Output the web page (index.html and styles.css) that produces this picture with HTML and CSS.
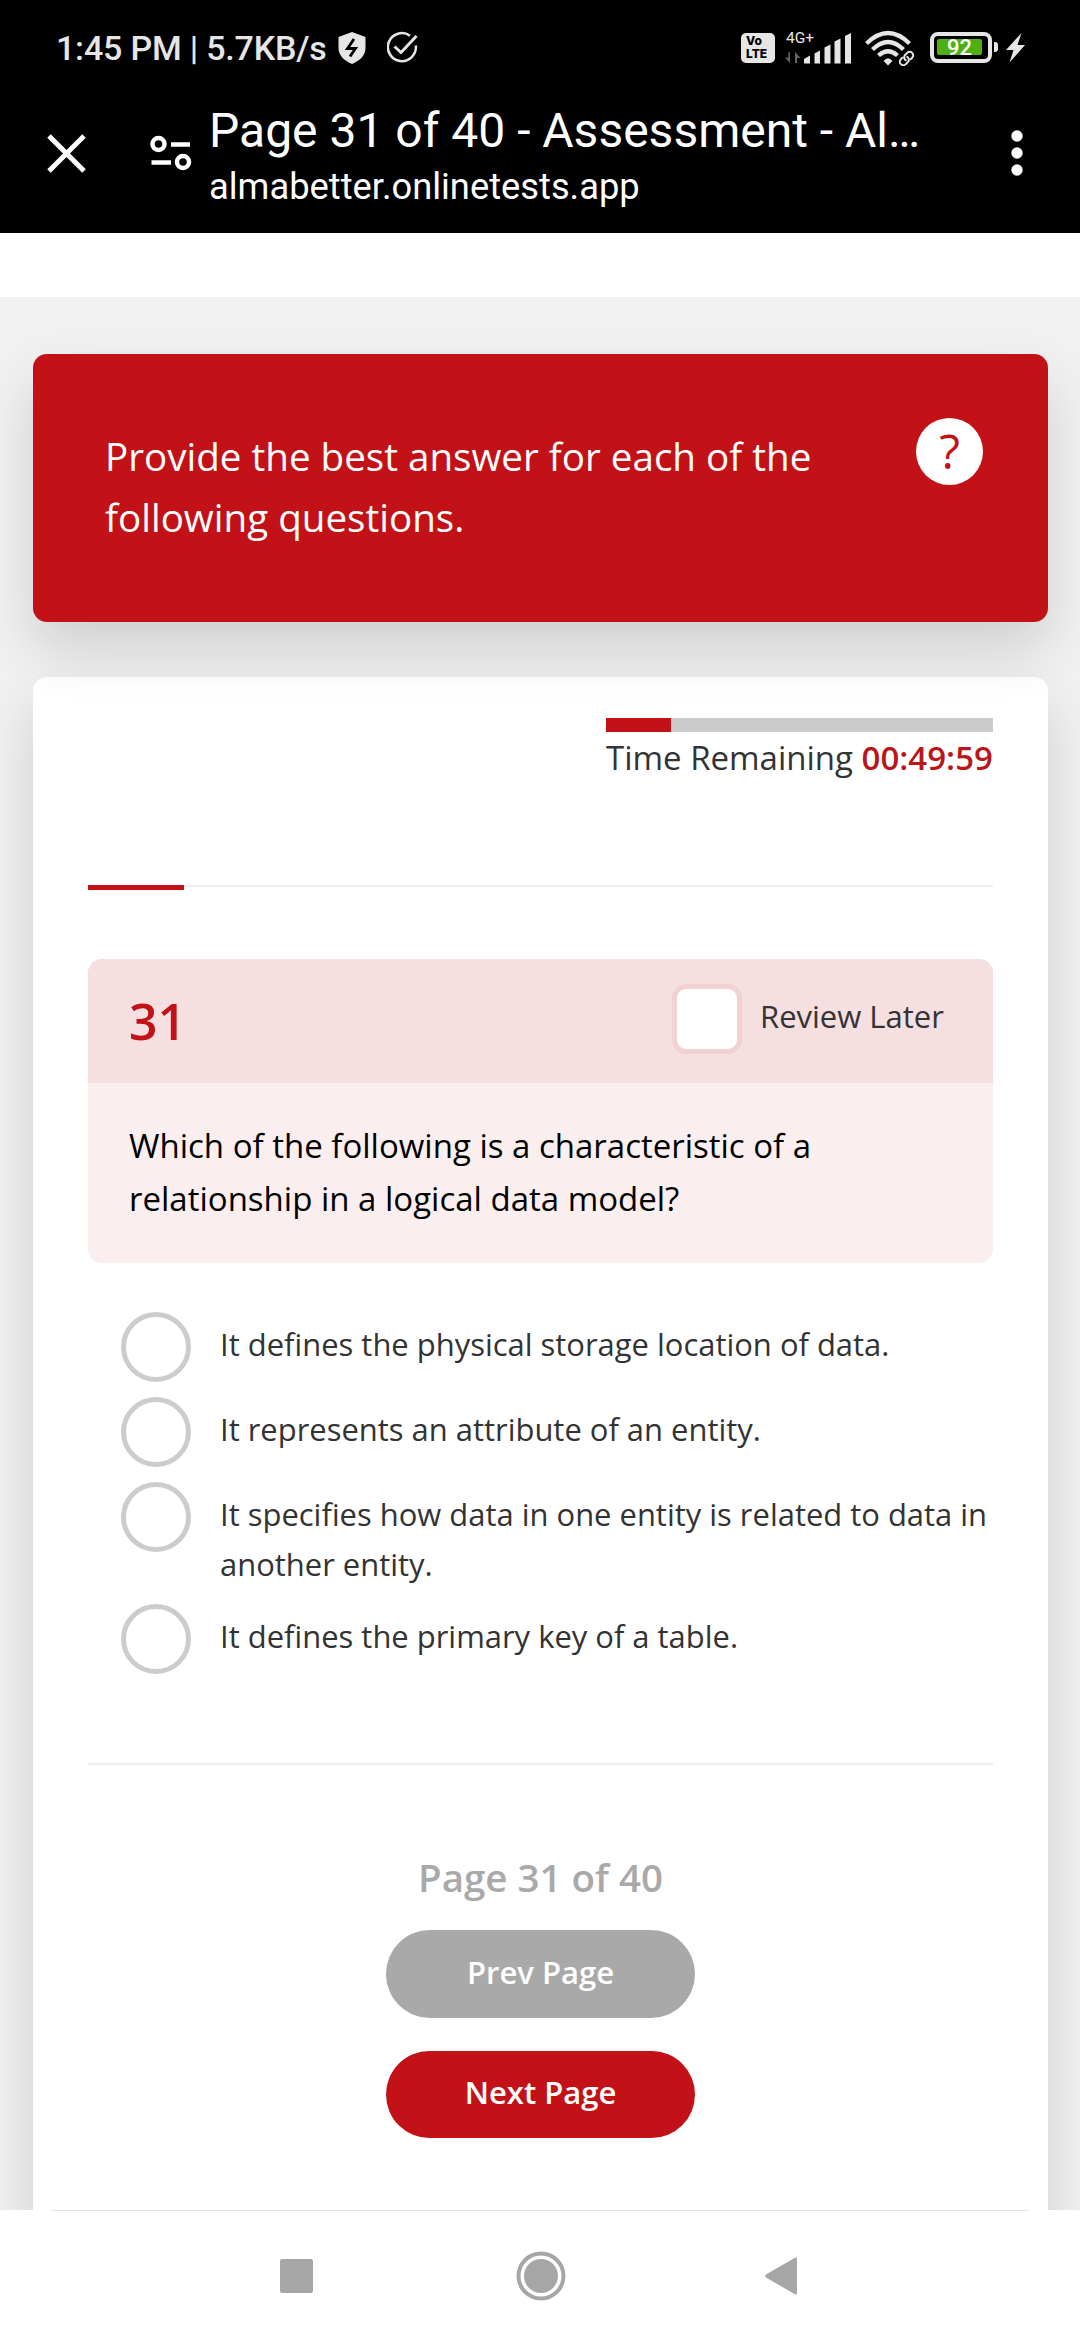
FILE: index.html
```html
<!DOCTYPE html>
<html lang="en">
<head>
<meta charset="utf-8">
<title>Page 31 of 40 - Assessment</title>
<link rel="stylesheet" href="styles.css">
</head>
<body>
<div class="screen">
  <header class="top">
    <div class="status">
      <div class="status-left">
        <span class="clock">1:45 PM | 5.7KB/s</span>
        <svg class="shield" width="28" height="34" viewBox="0 0 28 34"><path d="M14 1 L27.500 6 V17 C27.500 25 21 30 14 33 C7 30 .5 25 .5 17 V6 Z" fill="#e6e6e6"/><path d="M16 8 L9.500 17.500 H17.500 L12 25.500" fill="none" stroke="#000" stroke-width="2.800"/></svg>
        <svg class="tick" width="32" height="34" viewBox="0 0 32 34"><path d="M23 4.700 A14 14 0 1 0 28.800 14.500" fill="none" stroke="#e6e6e6" stroke-width="2.500"/><path d="M7.500 15.500 L14 21.500 L29.500 5" fill="none" stroke="#e6e6e6" stroke-width="3"/></svg>
      </div>
      <div class="status-right">
        <span class="volte"><span>Vo</span><span>LTE</span></span>
        <span class="signal">
          <span class="net">4G+</span>
          <svg width="66" height="31" viewBox="0 0 66 31"><path d="M5 19 V30 L0 24.500 H3.500 V19Z M10 30 V19 L15.500 25 H12 V30Z" fill="#666"/><g fill="#e6e6e6"><path d="M19 30 V26 L25 22.500 V30.500 H19Z"/><path d="M29.500 30.500 V20.500 L35 17.500 V30.500Z"/><path d="M39.500 30.500 V14.500 L45.500 11.500 V30.500Z"/><path d="M49.500 30.500 V8.500 L55.500 5.500 V30.500Z"/><path d="M60 30.500 V3 L66 0 V30.500Z"/></g></svg>
        </span>
        <svg class="wifi" width="50" height="36" viewBox="0 0 50 36"><g fill="none" stroke="#e6e6e6" stroke-width="4.300"><path d="M1.500 13.500 Q23 -7.500 44.500 13.500"/><path d="M7.500 19.500 Q23 4.500 38.500 19.500"/><path d="M13.500 25.500 Q23 17 32.500 25.500"/></g><path d="M18.500 31 Q23 25.500 27.500 31 L23 35.500Z" fill="#e6e6e6"/><g transform="rotate(-45 41.500 28.500)" fill="none" stroke="#000" stroke-width="6"><rect x="33" y="25" width="10" height="7" rx="3.500"/><rect x="40" y="25" width="10" height="7" rx="3.500"/></g><g transform="rotate(-45 41.500 28.500)" fill="none" stroke="#e6e6e6" stroke-width="2"><path d="M40 25 H37 a3.500 3.500 0 0 0 0 7 H40 a3.500 3.500 0 0 0 3 -5"/><path d="M43 32 H46 a3.500 3.500 0 0 0 0 -7 H43 a3.500 3.500 0 0 0 -3 5"/></g></svg>
        <span class="battery"><span class="level">92</span></span><span class="cap"></span>
        <svg class="bolt" width="19" height="30" viewBox="0 0 19 30"><path d="M15.500 0 L0 17 H7.500 L3.500 29.500 L19 12 H11.500 Z" fill="#e6e6e6"/></svg>
      </div>
    </div>
    <div class="toolbar">
      <svg class="close" width="39" height="39" viewBox="0 0 39 39"><path d="M2 2 L37 37 M37 2 L2 37" stroke="#fff" stroke-width="5"/></svg>
      <svg class="tune" width="42" height="36" viewBox="0 0 42 36"><g fill="none" stroke="#fff" stroke-width="4.500"><circle cx="8.500" cy="9" r="6"/><circle cx="33" cy="27" r="6"/><path d="M21 9.500 H40 M1.500 27.500 H21"/></g></svg>
      <div class="heading">
        <div class="title">Page 31 of 40 - Assessment - Al…</div>
        <div class="url">almabetter.onlinetests.app</div>
      </div>
      <svg class="more" width="12" height="46" viewBox="0 0 12 46"><g fill="#fff"><circle cx="6" cy="6" r="5.700"/><circle cx="6" cy="23" r="5.700"/><circle cx="6" cy="40" r="5.700"/></g></svg>
    </div>
  </header>
  <main class="page">
    <section class="intro">
      <p class="intro-text">Provide the best answer for each of the following questions.</p>
      <span class="help">?</span>
    </section>
    <section class="card">
      <div class="timer">
        <div class="timer-bar"><div class="timer-fill"></div></div>
        <div class="timer-text">Time Remaining <b>00:49:59</b></div>
      </div>
      <div class="rule"><div class="rule-fill"></div></div>
      <div class="question">
        <div class="question-head">
          <span class="number">31</span>
          <span class="review"><span class="checkbox"></span><span class="review-label">Review Later</span></span>
        </div>
        <p class="question-text">Which of the following is a characteristic of a<br>relationship in a logical data model?</p>
      </div>
      <ul class="answers">
        <li><span class="radio"></span><span class="answer">It defines the physical storage location of data.</span></li>
        <li><span class="radio"></span><span class="answer">It represents an attribute of an entity.</span></li>
        <li><span class="radio"></span><span class="answer">It specifies how data in one entity is related to data in<br>another entity.</span></li>
        <li><span class="radio"></span><span class="answer">It defines the primary key of a table.</span></li>
      </ul>
      <div class="pager">
        <div class="pager-text">Page 31 of 40</div>
        <div class="button prev">Prev Page</div>
        <div class="button next">Next Page</div>
      </div>
    </section>
  </main>
  <nav class="navbar">
    <div class="nav-line"></div>
    <div class="nav-keys">
      <svg width="33" height="34" viewBox="0 0 33 34"><rect width="33" height="34" rx="2" fill="#a6a6a6"/></svg>
      <svg class="home" width="50" height="50" viewBox="0 0 50 50"><circle cx="25" cy="25" r="22.500" fill="none" stroke="#a6a6a6" stroke-width="4"/><circle cx="25" cy="25" r="17" fill="#a6a6a6"/></svg>
      <svg class="back" width="32" height="38" viewBox="0 0 32 38"><path d="M1 17.500 L30 .7 Q32 0 32 2 V36 Q32 38 30 37.300 L1 20.500 Q-.5 19 1 17.500Z" fill="#a6a6a6"/></svg>
    </div>
  </nav>
</div>
</body>
</html>
```
FILE: styles.css
```css
* { box-sizing: border-box; }
body { margin: 0; background: #fff; font-family: "Open Sans", "Noto Sans", sans-serif; color: #333; }
p, ul { margin: 0; padding: 0; list-style: none; }
svg { display: block; flex: none; }
.screen { width: 1080px; height: 2340px; display: flex; flex-direction: column; overflow: hidden; }

.top { height: 233px; flex: none; background: #000; color: #fff; font-family: Roboto, sans-serif; }
.status { height: 96px; display: flex; justify-content: space-between; padding: 0 55px 0 56px; }
.status-left, .status-right { display: flex; align-items: flex-start; }
.clock { font-size: 34px; font-weight: 500; letter-spacing: -.2px; line-height: 40px; color: #e6e6e6; margin-top: 28px; width: 282px; white-space: nowrap; }
.shield { margin-top: 31px; }
.tick { margin: 31px 0 0 21px; }
.volte { width: 34px; height: 30px; margin-top: 33px; border-radius: 5px; background: #e6e6e6; color: #000; font: 800 12px/12px Inter, sans-serif; padding: 2px 0 0 5px; display: flex; flex-direction: column; gap: 1px; }
.signal { margin: 31px 0 0 10px; width: 66px; height: 33px; display: grid; }
.signal > * { grid-area: 1 / 1; }
.signal svg { margin-top: 2px; }
.net { font-size: 15.5px; line-height: 14px; color: #e6e6e6; padding-left: 1px; }
.wifi { margin: 30px 0 0 14px; }
.battery { width: 62px; height: 31px; margin: 32px 0 0 15px; border: 4px solid #e6e6e6; border-radius: 8px; padding: 3px; }
.level { display: block; width: 45px; height: 16px; border-radius: 2px; background: #4fb014; color: #fff; font-size: 22px; font-weight: 500; line-height: 18px; text-align: center; }
.cap { width: 4px; height: 10px; margin: 42px 0 0 2px; border-radius: 0 3px 3px 0; background: #e6e6e6; }
.bolt { margin: 33px 0 0 8px; }

.toolbar { height: 137px; display: flex; padding-left: 47px; }
.close { margin-top: 38px; }
.tune { margin: 39px 0 0 64px; }
.heading { margin-left: 17px; width: 802px; white-space: nowrap; }
.title { font-size: 48px; line-height: 58px; margin-top: 6px; }
.url { font-size: 36.3px; line-height: 42px; margin-top: 6px; }
.more { margin-top: 34px; }

.page { flex: 1; min-height: 0; overflow: hidden; border-top: 64px solid #fff; background: #f1f1f1; padding: 57px 32px 0 33px; }
.intro { height: 268px; border-radius: 14px; background: #c21217; color: #fff; position: relative; z-index: 1; display: flex; justify-content: space-between; padding: 64px 65px 0 72px; box-shadow: 0 27px 55px rgba(0,0,0,.14); }
.intro-text { width: 740px; font-size: 38.6px; line-height: 61px; margin-top: 8px; }
.help { width: 67px; height: 67px; border-radius: 50%; background: #fff; color: #c21217; font-size: 48px; line-height: 66px; text-align: center; }

.card { margin-top: 55px; height: 1800px; border-radius: 14px; background: #fff; box-shadow: 0 27px 55px rgba(0,0,0,.14); padding: 41px 55px 0; }
.timer { width: 387px; height: 167px; margin-left: auto; }
.timer-bar { height: 14px; background: #ccc; }
.timer-fill { width: 65px; height: 14px; background: #c21217; }
.timer-text { font-size: 33px; line-height: 52px; white-space: nowrap; }
.timer-text b { font-weight: 600; color: #b9161b; }
.rule { height: 5px; border-top: 2px solid #eee; }
.rule-fill { width: 96px; height: 5px; margin-top: -2px; background: #c21217; }
.question { margin-top: 69px; height: 304px; border-radius: 14px; overflow: hidden; background: #faeeee; }
.question-head { height: 124px; background: #f6dfe1; display: flex; justify-content: space-between; padding: 25px 49px 0 41px; }
.number { font-size: 50px; font-weight: 600; line-height: 70px; margin-top: 2px; color: #c21217; }
.review { display: flex; }
.checkbox { width: 70px; height: 70px; border: 5px solid #f2d1d3; border-radius: 14px; background: #fff; }
.review-label { font-size: 31px; line-height: 50px; margin: 7px 0 0 18px; width: 184px; white-space: nowrap; }
.question-text { font-size: 33px; line-height: 53px; color: #000; padding: 36px 0 0 41px; white-space: nowrap; }
.answers { margin-top: 49px; height: 451px; padding-left: 33px; }
.answers li { display: flex; min-height: 85px; padding-bottom: 15px; }
.answers li:nth-child(3) { height: 122px; }
.radio { width: 70px; height: 70px; flex: none; border: 5px solid #ccc; border-radius: 50%; }
.answer { font-size: 30.95px; line-height: 50px; margin: 7px 0 0 29px; white-space: nowrap; }
.pager { border-top: 2px solid #eee; display: flex; flex-direction: column; align-items: center; }
.pager-text { font-size: 38.5px; font-weight: 600; line-height: 60px; margin-top: 82px; color: #a9a9a9; }
.button { width: 309px; height: 88px; border-radius: 44px; color: #fff; font-size: 31px; font-weight: 600; line-height: 84px; text-align: center; }
.prev { margin-top: 23px; background: #a9a9a9; }
.next { margin-top: 33px; height: 87px; line-height: 82px; background: #c21217; }

.navbar { height: 130px; flex: none; background: #fff; }
.nav-line { height: 1px; margin: 0 52px; background: #e2e2e2; }
.nav-keys { height: 129px; display: flex; align-items: center; padding-left: 280px; }
.home { margin-left: 203px; }
.back { margin-left: 199px; }
```
